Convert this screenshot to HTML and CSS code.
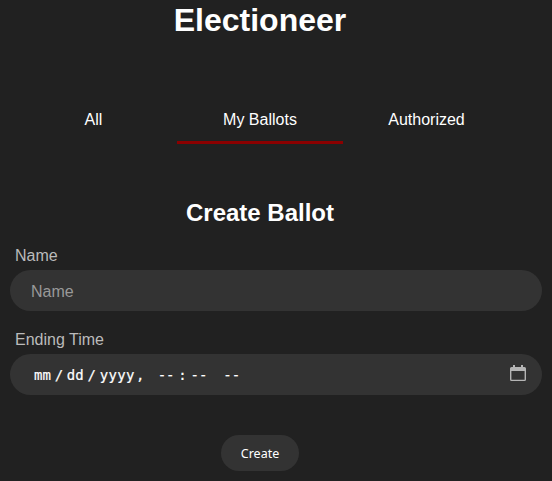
FILE: index.html
```html
<!DOCTYPE html>
<html lang="en">
<head>
<meta charset="utf-8">
<title>Electioneer</title>
<link rel="stylesheet" href="styles.css">
</head>
<body>
<h1>Electioneer</h1>
<nav class="tabs">
  <a class="tab">All</a>
  <a class="tab active">My Ballots</a>
  <a class="tab">Authorized</a>
</nav>
<main>
  <h2>Create Ballot</h2>
  <form>
    <label for="name">Name</label>
    <input class="field" id="name" type="text" placeholder="Name">
    <label>Ending Time</label>
    <div class="field datetime">
      <div class="parts"><span>mm</span><span class="sep">/</span><span>dd</span><span class="sep">/</span><span class="year">yyyy</span><span class="comma">,</span><span class="hour">--</span><span class="sep">:</span><span class="minute">--</span><span>--</span></div>
      <svg class="calendar" width="16" height="16" viewBox="0 0 16 16">
        <path fill="#b5b5b5" fill-rule="evenodd" d="M3 0h2v2h6V0h2v2h1.500Q16 2 16 3.500V14.500Q16 16 14.500 16h-13Q0 16 0 14.500V3.500Q0 2 1.500 2H3zM1.400 6v8.700h13.200V6z"/>
      </svg>
    </div>
    <button type="button">Create</button>
  </form>
</main>
</body>
</html>
```
FILE: styles.css
```css
* { box-sizing: border-box; }
body {
  margin: 0;
  height: 481px;
  overflow: hidden;
  background: #212121;
  color: #fff;
  font: 16px/18px "Liberation Sans", Arial, sans-serif;
}
h1 {
  margin: 0;
  padding-top: 1px;
  width: 520px;
  font-size: 32px;
  line-height: 38px;
  text-align: center;
}
.tabs {
  display: grid;
  grid-template-columns: repeat(3, 166px);
  width: 498px;
  margin: 57px 0 0 11px;
}
.tab {
  height: 48px;
  padding-top: 15px;
  text-align: center;
  border-bottom: 3px solid transparent;
}
.tab:first-child { padding-right: 1px; }
.tab:last-child { padding-left: 1px; }
.active { border-color: #8b0000; }
h2 {
  width: 520px;
  margin: 55px 0 20px;
  font-size: 24px;
  line-height: 28px;
  text-align: center;
}
form {
  display: flex;
  flex-direction: column;
  padding: 0 10px;
}
label {
  margin: 0 0 5px 5px;
  color: #bbb;
}
.field {
  width: 100%;
  height: 41px;
  margin: 0 0 20px;
  padding: 3px 16px 0 21px;
  border: 0;
  border-radius: 21px;
  background: #333;
  color: #fff;
  font: 16px/18px "Liberation Sans", Arial, sans-serif;
}
.field::placeholder { color: #999; opacity: 1; }
.datetime {
  display: flex;
  align-items: center;
  justify-content: space-between;
  padding: 0 16px 0 24px;
}
.parts {
  display: flex;
  font: 14px/18px "DejaVu Sans Mono", monospace;
  -webkit-text-stroke: 0.2px #fff;
}
.sep { width: 16px; text-align: center; }
.year { letter-spacing: 0.3px; }
.comma { width: 11px; text-align: center; }
.hour { margin-left: 12px; }
.minute { margin-right: 16px; }
.calendar { margin-top: -3px; }
button {
  align-self: center;
  width: 78px;
  height: 36px;
  margin: 20px 32px 0 0;
  padding: 0;
  border: 0;
  border-radius: 18px;
  background: #333;
  color: #fff;
  font: 12.5px "Noto Sans", sans-serif;
}
```
